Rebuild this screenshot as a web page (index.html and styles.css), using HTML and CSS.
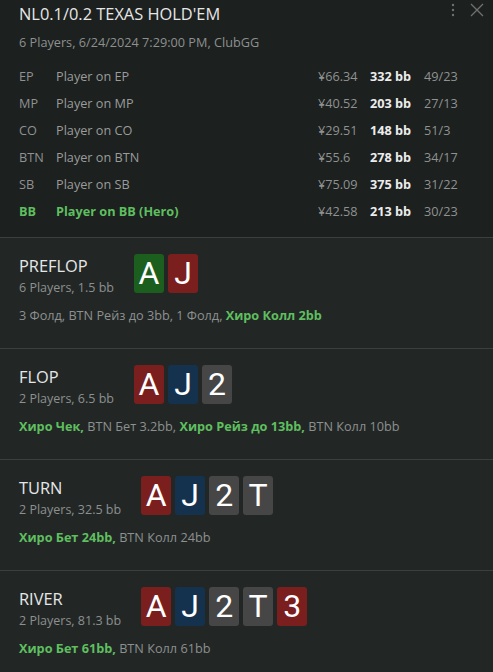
FILE: index.html
```html
<!DOCTYPE html>
<html lang="ru">
  <head>
    <meta charset="UTF-8" />
    <meta name="viewport" content="width=device-width, initial-scale=1.0" />
    <title>Hand History</title>
    <link rel="stylesheet" href="styles.css">
  </head>
  <body>
    <div class="hand">
      <div class="summary">
        <div class="tools">
          <svg class="kebab" width="4" height="14" viewBox="0 0 4 14"><circle cx="2" cy="2" r="1.2"/><circle cx="2" cy="7" r="1.2"/><circle cx="2" cy="12" r="1.2"/></svg>
          <svg class="close" width="14" height="14" viewBox="0 0 14 14"><path d="M1 1 L13 13 M13 1 L1 13"/></svg>
        </div>
        <h1 class="title">NL0.1/0.2 TEXAS HOLD'EM</h1>
        <p class="meta">6 Players, 6/24/2024 7:29:00 PM, ClubGG</p>
        <div class="players">
          <div class="player">
            <span class="pos">EP</span><span class="name">Player on EP</span>
            <span class="money">¥66.34</span><span class="stack">332 bb</span><span class="vpip">49/23</span>
          </div>
          <div class="player">
            <span class="pos">MP</span><span class="name">Player on MP</span>
            <span class="money">¥40.52</span><span class="stack">203 bb</span><span class="vpip">27/13</span>
          </div>
          <div class="player">
            <span class="pos">CO</span><span class="name">Player on CO</span>
            <span class="money">¥29.51</span><span class="stack">148 bb</span><span class="vpip">51/3</span>
          </div>
          <div class="player">
            <span class="pos">BTN</span><span class="name">Player on BTN</span>
            <span class="money">¥55.6</span><span class="stack">278 bb</span><span class="vpip">34/17</span>
          </div>
          <div class="player">
            <span class="pos">SB</span><span class="name">Player on SB</span>
            <span class="money">¥75.09</span><span class="stack">375 bb</span><span class="vpip">31/22</span>
          </div>
          <div class="player hero">
            <span class="pos">BB</span><span class="name">Player on BB (Hero)</span>
            <span class="money">¥42.58</span><span class="stack">213 bb</span><span class="vpip">30/23</span>
          </div>
        </div>
      </div>

      <div class="street">
        <div class="street-head">
          <div class="street-info">
            <h2 class="street-name">PREFLOP</h2>
            <p class="street-pot">6 Players, 1.5 bb</p>
          </div>
          <div class="cards">
            <span class="card clubs">A</span>
            <span class="card hearts">J</span>
          </div>
        </div>
        <p class="actions">3 Фолд, BTN Рейз до 3bb, 1 Фолд, <b class="me">Хиро Колл 2bb</b></p>
      </div>

      <div class="street">
        <div class="street-head">
          <div class="street-info">
            <h2 class="street-name">FLOP</h2>
            <p class="street-pot">2 Players, 6.5 bb</p>
          </div>
          <div class="cards">
            <span class="card hearts">A</span>
            <span class="card diamonds">J</span>
            <span class="card spades">2</span>
          </div>
        </div>
        <p class="actions"><b class="me">Хиро Чек,</b> BTN Бет 3.2bb, <b class="me">Хиро Рейз до 13bb,</b> BTN Колл 10bb</p>
      </div>

      <div class="street">
        <div class="street-head">
          <div class="street-info">
            <h2 class="street-name">TURN</h2>
            <p class="street-pot">2 Players, 32.5 bb</p>
          </div>
          <div class="cards">
            <span class="card hearts">A</span>
            <span class="card diamonds">J</span>
            <span class="card spades">2</span>
            <span class="card spades">T</span>
          </div>
        </div>
        <p class="actions"><b class="me">Хиро Бет 24bb,</b> BTN Колл 24bb</p>
      </div>

      <div class="street">
        <div class="street-head">
          <div class="street-info">
            <h2 class="street-name">RIVER</h2>
            <p class="street-pot">2 Players, 81.3 bb</p>
          </div>
          <div class="cards">
            <span class="card hearts">A</span>
            <span class="card diamonds">J</span>
            <span class="card spades">2</span>
            <span class="card spades">T</span>
            <span class="card hearts">3</span>
          </div>
        </div>
        <p class="actions"><b class="me">Хиро Бет 61bb,</b> BTN Колл 61bb</p>
      </div>
    </div>
  </body>
</html>
```

FILE: styles.css
```css
body {
  margin: 0;
  background-color: #222726;
  font-family: "Open Sans", "Noto Sans", sans-serif;
  color: #9a9c9b;
  overflow: hidden;
}
.hand {
  width: 493px;
}
.summary {
  position: relative;
  height: 237px;
  padding: 3px 19px 0;
  box-sizing: border-box;
  background-color: #1c201f;
}
.tools {
  position: absolute;
  top: 3px;
  right: 9px;
  display: flex;
  align-items: center;
  gap: 15px;
}
.kebab {
  fill: #6f7271;
}
.close {
  stroke: #6f7271;
  stroke-width: 1.3;
  fill: none;
}
.title {
  margin: 0;
  font-size: 16.4px;
  line-height: 22px;
  font-weight: normal;
  color: #e6e6e6;
}
.meta {
  margin: 8px 0 0;
  font-size: 12.7px;
  line-height: 18px;
  color: #8d908f;
}
.players {
  margin-top: 12px;
}
.player {
  display: grid;
  grid-template-columns: 37px 1fr 52px 54px 50px;
  font-size: 12.7px;
  line-height: 27px;
  color: #8f9291;
}
.player .name {
  color: #9a9c9b;
}
.player .stack {
  font-weight: bold;
  color: #ececec;
}
.player.hero .pos,
.player.hero .name {
  font-weight: bold;
  color: #5fbf5f;
}
.street {
  height: 111px;
  padding: 16px 19px 0;
  box-sizing: border-box;
  border-top: 1px solid #3c3f3f;
}
.street-head {
  display: flex;
  align-items: flex-start;
  gap: 20px;
  height: 43px;
}
.street-info {
  margin-top: 1px;
}
.street-name {
  margin: 0;
  font-size: 16.4px;
  line-height: 22px;
  font-weight: normal;
  color: #e6e6e6;
}
.street-pot {
  margin: 2px 0 0;
  font-size: 12.5px;
  line-height: 18px;
  color: #8d908f;
}
.cards {
  display: flex;
  gap: 4px;
}
.card {
  width: 30px;
  height: 39px;
  border-radius: 3px;
  display: flex;
  align-items: center;
  justify-content: center;
  font-family: Roboto, "Open Sans", sans-serif;
  font-size: 32px;
  line-height: 39px;
  color: #ffffff;
}
.card.clubs { background-color: #1b5e1d; }
.card.hearts { background-color: #7a1e1e; }
.card.diamonds { background-color: #14324d; }
.card.spades { background-color: #464646; }
.actions {
  margin: 9px 0 0;
  font-size: 12.7px;
  line-height: 18px;
  color: #8d908f;
  white-space: nowrap;
}
.actions .me {
  color: #5fbf5f;
}
```
